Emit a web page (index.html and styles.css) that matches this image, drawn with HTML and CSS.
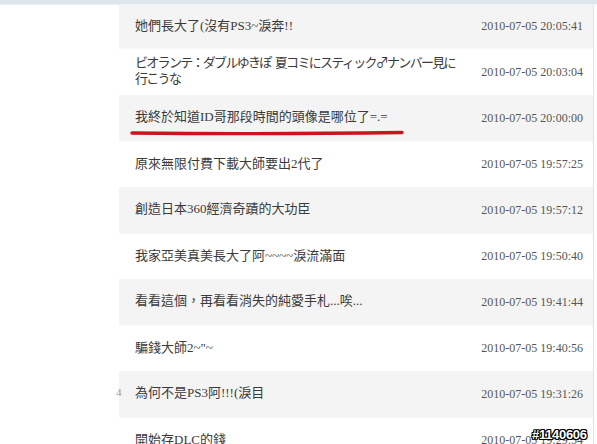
FILE: index.html
```html
<!DOCTYPE html>
<html lang="zh-Hant">
<head>
    <meta charset="UTF-8">
    <title>留言</title>
    <link rel="stylesheet" href="styles.css">
</head>
<body>
    <div class="topbar"></div>
    <div class="page">
        <ul class="list">
            <li class="row first"><span class="msg">她們長大了(沒有PS3~淚奔!!</span><span class="time">2010-07-05 20:05:41</span></li>
            <li class="row tall"><span class="msg jp">ビオランテ：ダブルゆきぽ 夏コミにスティック♂ナンバー見に<br>行こうな</span><span class="time">2010-07-05 20:03:04</span></li>
            <li class="row"><span class="msg">我終於知道ID哥那段時間的頭像是哪位了=.=</span><span class="time">2010-07-05 20:00:00</span></li>
            <li class="row"><span class="msg">原來無限付費下載大師要出2代了</span><span class="time">2010-07-05 19:57:25</span></li>
            <li class="row"><span class="msg">創造日本360經濟奇蹟的大功臣</span><span class="time">2010-07-05 19:57:12</span></li>
            <li class="row"><span class="msg">我家亞美真美長大了阿~~~~淚流滿面</span><span class="time">2010-07-05 19:50:40</span></li>
            <li class="row"><span class="msg">看看這個，再看看消失的純愛手札...唉...</span><span class="time">2010-07-05 19:41:44</span></li>
            <li class="row"><span class="msg">騙錢大師2~"~</span><span class="time">2010-07-05 19:40:56</span></li>
            <li class="row"><span class="num">4</span><span class="msg">為何不是PS3阿!!!(淚目</span><span class="time">2010-07-05 19:31:26</span></li>
            <li class="row"><span class="msg">開始存DLC的錢</span><span class="time">2010-07-05 19:29:54</span></li>
        </ul>
    </div>

    <!-- hand-drawn red underline -->
    <svg class="mark" width="597" height="444" viewBox="0 0 597 444">
        <path d="M132 133 Q260 134.5 402 132.5" fill="none" stroke="#c8141c" stroke-width="3.4" stroke-linecap="round"/>
    </svg>

    <div class="stamp">#1140606</div>
</body>
</html>
```

FILE: styles.css
```css
body { margin: 0; background: #fff; width: 597px; height: 444px; overflow: hidden; position: relative; }
.topbar { height: 5px; background: #dde6ec; border-bottom: 1px solid #eef2f5; box-sizing: border-box; }
.page { padding-left: 119px; }
.list { list-style: none; margin: 0; padding: 0; width: 474px; border-right: 1px solid #e2e2e2; }
.row { position: relative; display: flex; align-items: center; justify-content: space-between; height: 46px; padding: 0 10px 0 16px; box-sizing: border-box; border-top: 1px solid #f9f9f9; }
.row:nth-child(odd) { background: #f4f4f4; border-top: none; }
.row.first { height: 43px; }
.row.tall { height: 47px; }
.msg { font-family: "Liberation Serif", "Noto Sans CJK TC", sans-serif; font-size: 13px; line-height: 16px; color: #3a3a3a; margin-top: -2px; }
.msg.jp { font-family: "Noto Sans CJK JP", sans-serif; letter-spacing: -1.7px; word-spacing: 3px; margin-top: -4px; }
.time { font-family: "Liberation Serif", serif; font-size: 12px; color: #555; white-space: nowrap; }
.num { position: absolute; left: -3px; top: 15px; font-family: "Liberation Serif", serif; font-size: 11px; color: #999; }
.mark { position: absolute; left: 0; top: 0; pointer-events: none; }
.stamp { position: absolute; left: 532px; top: 427px; font-family: "Liberation Sans", sans-serif; font-weight: bold; font-size: 13px; color: #fff; letter-spacing: -0.3px;
    text-shadow: 1px 0 0 #000, -1px 0 0 #000, 0 1px 0 #000, 0 -1px 0 #000, 1px 1px 0 #000, -1px -1px 0 #000, 1px -1px 0 #000, -1px 1px 0 #000; }
```
